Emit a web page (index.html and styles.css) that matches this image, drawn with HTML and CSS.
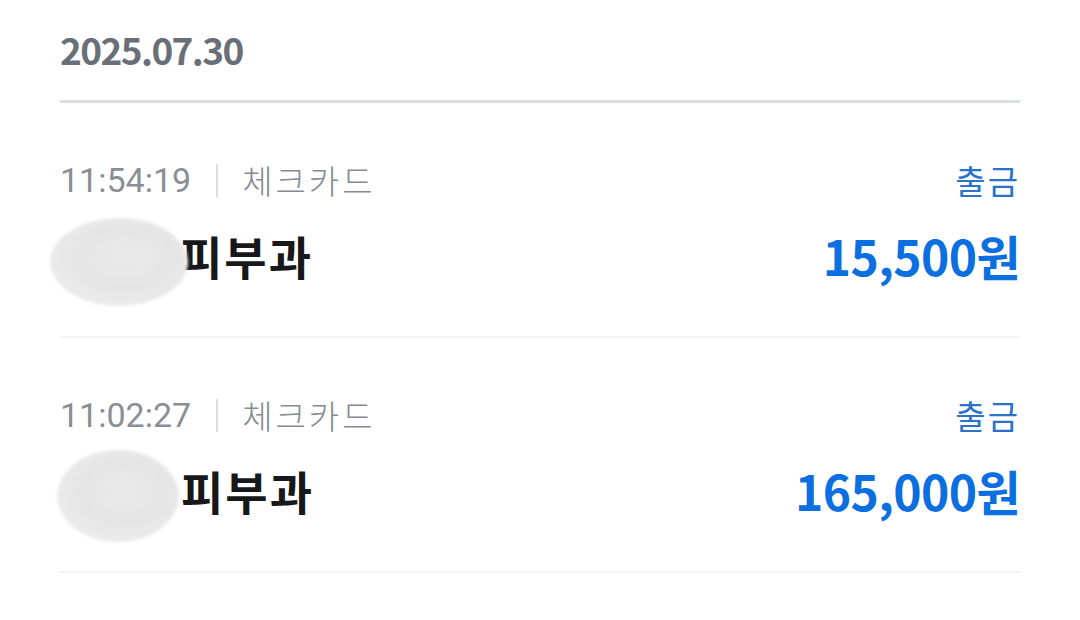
FILE: index.html
```html
<!DOCTYPE html>
<html lang="ko">
<head>
<meta charset="utf-8">
<link rel="stylesheet" href="styles.css">
</head>
<body>
<div class="page">
  <div class="date-header">2025.07.30</div>
  <div class="tx">
    <div class="tx-top">
      <div class="meta"><span class="time">11:54:19</span><span class="sep"></span><span class="card">체크카드</span></div>
      <div class="kind">출금</div>
    </div>
    <div class="tx-bottom">
      <div class="name"><span class="blur blur-a"></span><span>피부과</span></div>
      <div class="amount">15,500원</div>
    </div>
  </div>
  <div class="tx">
    <div class="tx-top">
      <div class="meta"><span class="time">11:02:27</span><span class="sep"></span><span class="card">체크카드</span></div>
      <div class="kind">출금</div>
    </div>
    <div class="tx-bottom">
      <div class="name"><span class="blur blur-b"></span><span>피부과</span></div>
      <div class="amount">165,000원</div>
    </div>
  </div>
</div>
</body>
</html>
```
FILE: styles.css
```css
html, body {
  margin: 0;
  padding: 0;
  background: #ffffff;
}
body {
  font-family: "Noto Sans CJK KR", "Noto Sans", sans-serif;
  width: 1080px;
  height: 620px;
  overflow: hidden;
}
.page {
  padding: 0 60px;
}
.date-header {
  padding-top: 24px;
  padding-bottom: 26px;
  line-height: 50px;
  font-size: 37px;
  font-weight: 700;
  color: #6a6f77;
  letter-spacing: -1.6px;
  border-bottom: 3px solid #dcdfe2;
}
.tx {
  padding-top: 55px;
  padding-bottom: 53px;
  border-bottom: 2px solid #f1f3f5;
}
.tx-top {
  display: flex;
  justify-content: space-between;
  align-items: center;
  height: 44px;
}
.meta {
  display: flex;
  align-items: center;
  color: #868b92;
}
.time {
  font-family: Roboto, "Noto Sans", sans-serif;
  font-size: 34px;
  font-weight: 400;
  color: #8a8f96;
}
.card {
  font-size: 33px;
  font-weight: 300;
  letter-spacing: 3px;
}
.sep {
  width: 2px;
  height: 33px;
  background: #dadde1;
  margin: 0 24px 0 25px;
}
.kind {
  font-size: 33px;
  font-weight: 400;
  color: #2a73c9;
  letter-spacing: 2px;
}
.tx-bottom {
  display: flex;
  justify-content: space-between;
  align-items: center;
  height: 56px;
  margin-top: 25px;
}
.name {
  display: flex;
  align-items: center;
  font-size: 46px;
  font-weight: 700;
  color: #17181a;
  letter-spacing: 2px;
}
.blur {
  display: block;
  border-radius: 50%;
  background: radial-gradient(ellipse at 55% 45%, #e9e9e9 0%, #e5e5e5 45%, #ececec 75%, #f6f6f6 100%);
  filter: blur(1.5px);
}
.blur-a {
  width: 138px;
  height: 88px;
  margin: -16px -8px -16px -10px;
  transform: translateY(7px);
}
.blur-b {
  width: 122px;
  height: 92px;
  margin: -18px 2px -18px -3px;
  transform: translateY(6px);
}
.amount {
  font-size: 48px;
  font-weight: 700;
  color: #0b6fe0;
  letter-spacing: -0.6px;
}
```
